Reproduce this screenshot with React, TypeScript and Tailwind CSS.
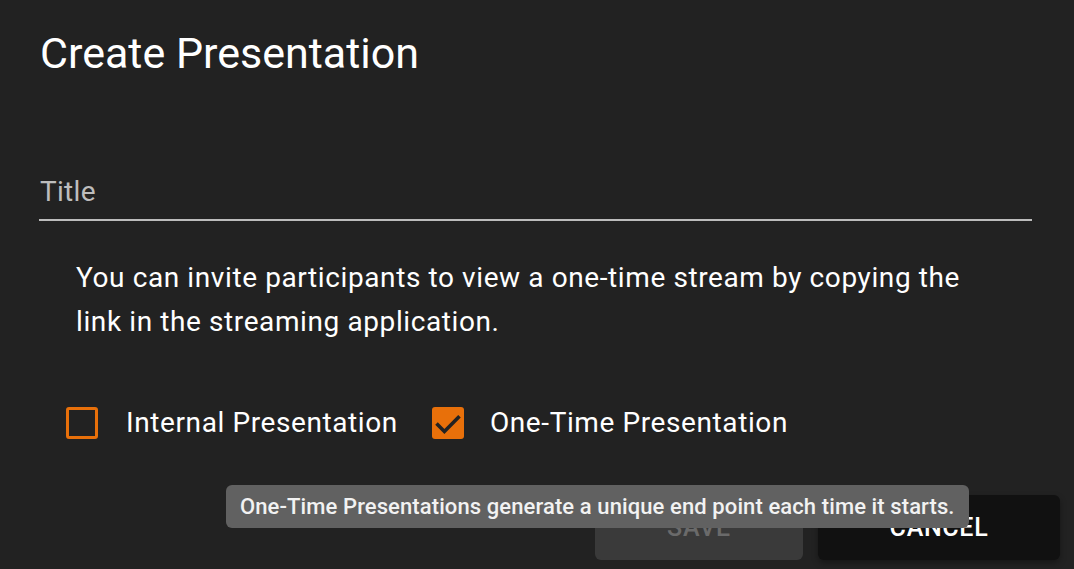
import React from 'react';

const Box: React.FC<{ checked?: boolean }> = ({ checked }) =>
  checked ? (
    <svg width="32" height="32" viewBox="0 0 32 32" className="shrink-0">
      <rect x="0" y="0" width="32" height="32" rx="3" fill="#e8700a" />
      <polyline points="4.5,16.5 12.4,24.4 27.5,9.3" fill="none" stroke="#222222" strokeWidth="3.6" />
    </svg>
  ) : (
    <span className="block w-[32px] h-[32px] shrink-0 rounded-[3px] border-[3px] border-[#e8700a]" />
  );

export default function App() {
  return (
    <div
      className="relative w-full h-[569px] overflow-hidden bg-[#222222] text-white"
      style={{ fontFamily: 'Roboto, "Noto Sans", sans-serif' }}
    >
      <h2 className="pt-[27px] pl-[40px] h-[79px] text-[43px] leading-[52px] font-normal">
        Create Presentation
      </h2>

      {/* Title field */}
      <div className="mt-[97px] ml-[39px] mr-[42px] pb-[11px] border-b-2 border-[#bdbdbd]">
        <div className="pl-[1px] text-[28px] leading-[32px] tracking-[0.3px] text-[#bdbdbd]">Title</div>
      </div>

      <p className="mt-[35px] pl-[76px] pr-[90px] text-[28px] leading-[44px] tracking-[0.6px]">
        You can invite participants to view a one-time stream by copying the link in the streaming application.
      </p>

      <div className="mt-[57px] pl-[66px] h-[44px] flex items-center text-[28px] tracking-[0.6px]">
        <Box />
        <span className="ml-[28px]">Internal Presentation</span>
        <span className="ml-[34px]">
          <Box checked />
        </span>
        <span className="ml-[26px]">One-Time Presentation</span>
      </div>

      <div className="mt-[50px] pr-[14px] flex justify-end gap-[15px]">
        <button className="w-[208px] h-[65px] rounded-[6px] bg-[#3a3a3a] text-[#6a6a6a] text-[25px] font-medium tracking-[0.7px] uppercase">
          Save
        </button>
        <button className="w-[242px] h-[65px] rounded-[6px] bg-[#111111] text-white text-[25px] font-medium tracking-[0.7px] uppercase shadow-[0_3px_6px_rgba(0,0,0,0.35)]">
          Cancel
        </button>
      </div>

      {/* Tooltip */}
      <div className="absolute left-[226px] top-[485px] h-[43px] px-[14px] flex items-center rounded-[6px] bg-[#616161] text-[22px] font-medium tracking-[0.1px] text-[#f2f2f2] whitespace-nowrap">
        One-Time Presentations generate a unique end point each time it starts.
      </div>
    </div>
  );
}
